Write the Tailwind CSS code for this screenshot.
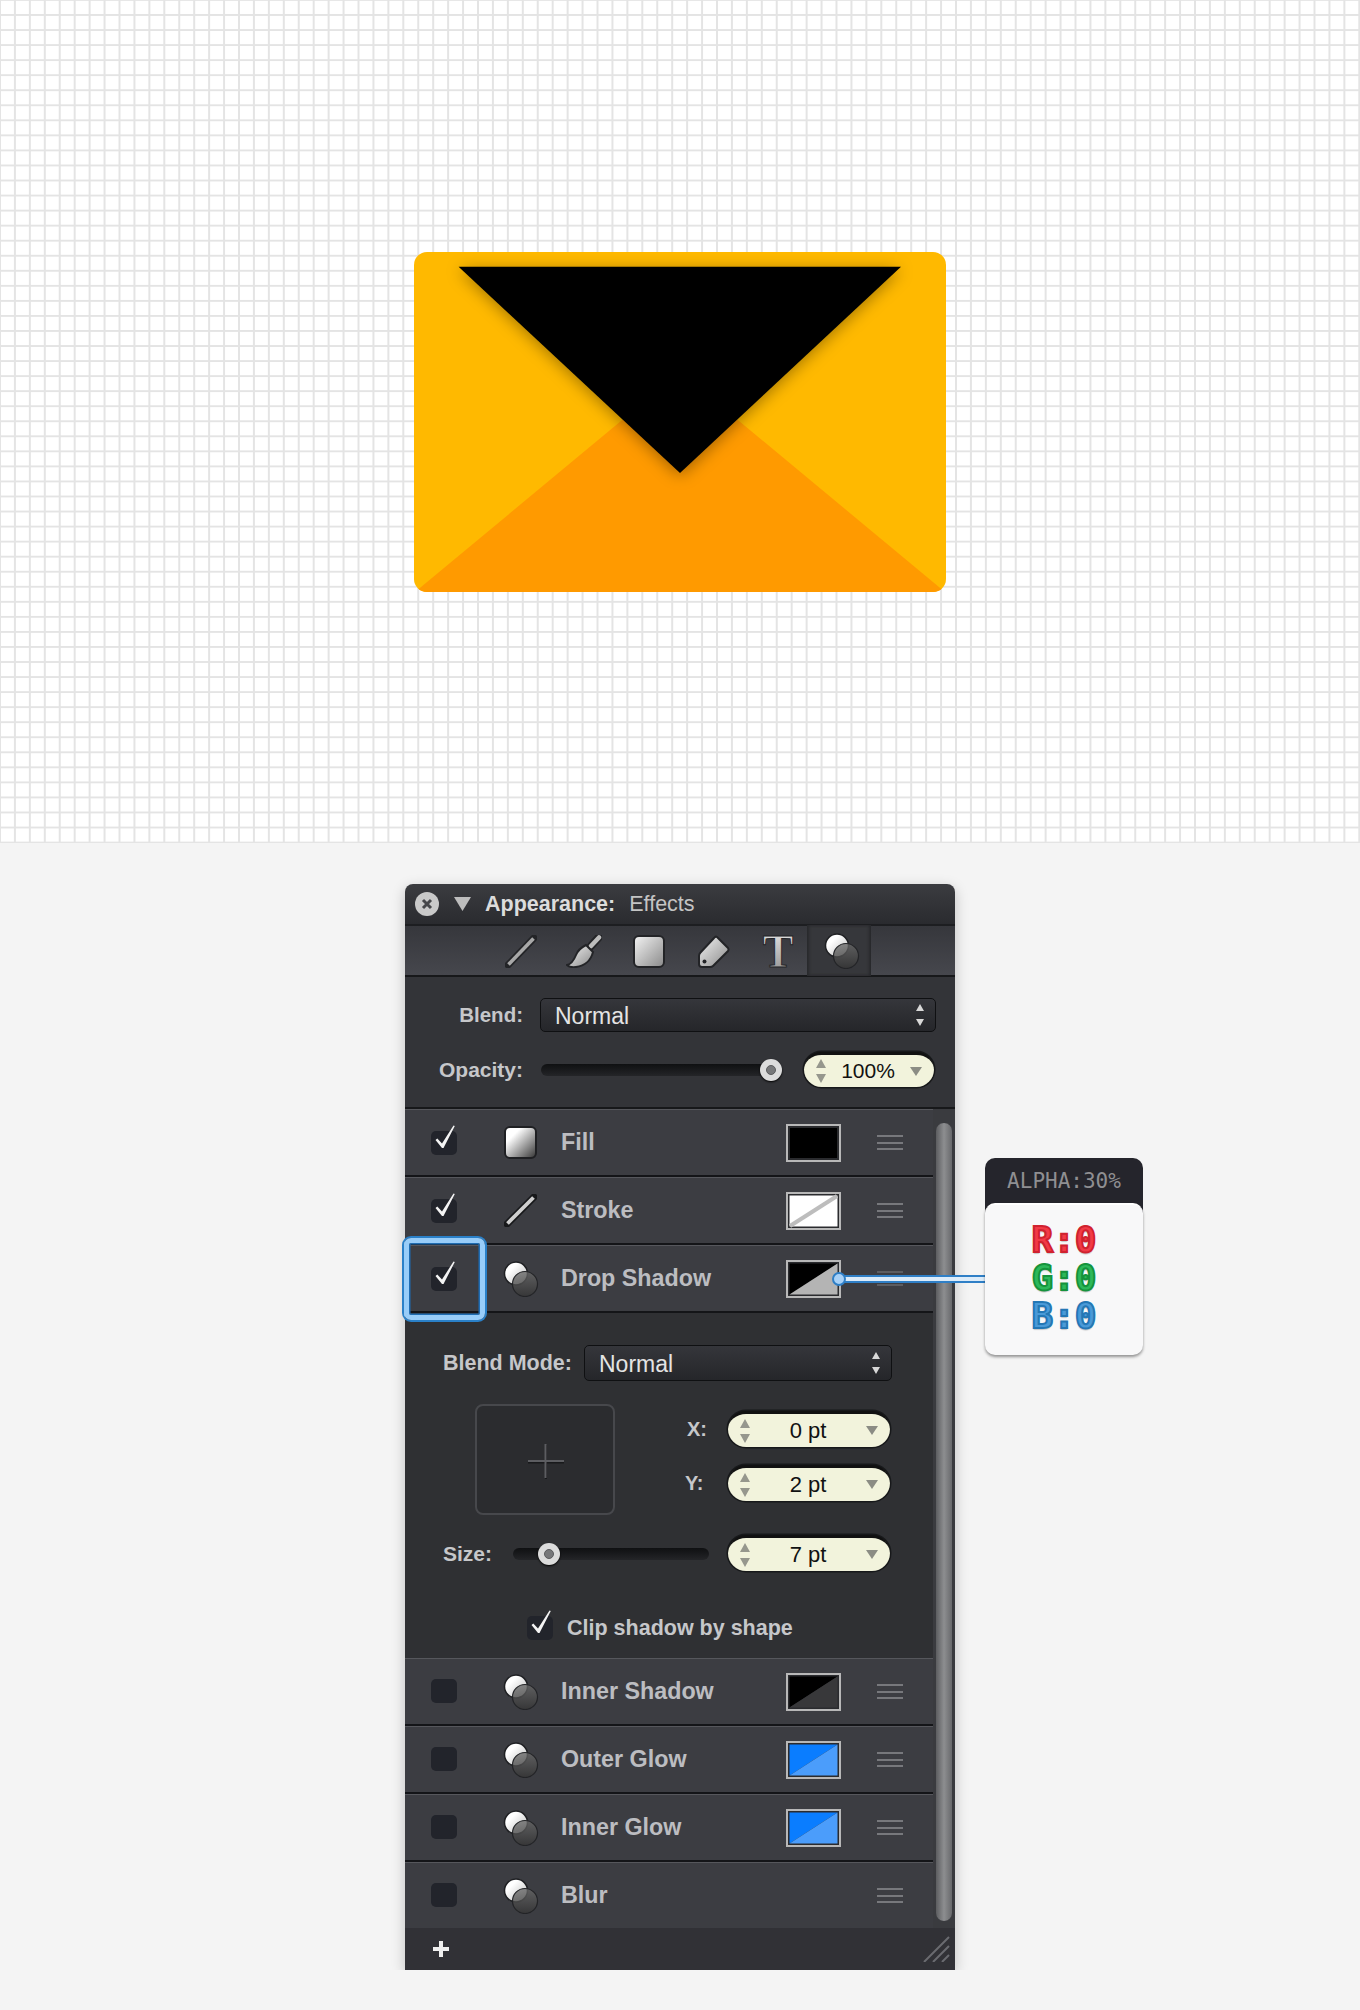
<!DOCTYPE html>
<html lang="en">

<head>
    <meta charset="UTF-8" />
    <meta name="viewport" content="width=device-width, initial-scale=1.0" />
    <title>Appearance Effects</title>
    <script src="https://cdn.jsdelivr.net/npm/@tailwindcss/browser@4"></script>
</head>

<body class="bg-[#f4f4f4] font-['Liberation_Sans',Arial,sans-serif]">

    <!-- shared icon parts -->
    <svg width="0" height="0" class="absolute">
        <defs>
            <linearGradient id="metal" x1="0" y1="0" x2="1" y2="1">
                <stop offset="0" stop-color="#f4f4f4" />
                <stop offset="1" stop-color="#8a8a8a" />
            </linearGradient>
            <linearGradient id="toolT" x1="0" y1="0" x2="0" y2="1">
                <stop offset="0" stop-color="#ececec" />
                <stop offset="1" stop-color="#8c8c8c" />
            </linearGradient>
            <linearGradient id="ball" x1="0" y1="0" x2="1" y2="1">
                <stop offset="0.3" stop-color="#ffffff" />
                <stop offset="1" stop-color="#b8b8b8" />
            </linearGradient>
            <linearGradient id="smoke" x1="0" y1="0" x2="0" y2="1">
                <stop offset="0" stop-color="#6a6a6a" />
                <stop offset="1" stop-color="#353535" />
            </linearGradient>
            <symbol id="circles" viewBox="0 0 36 36">
                <circle cx="13" cy="12.5" r="11.5" fill="url(#ball)" stroke="#1f2023" stroke-width="1.5" />
                <circle cx="22" cy="23" r="12.5" fill="url(#smoke)" fill-opacity="0.78" stroke="#232427" stroke-width="1.2" />
            </symbol>
            <symbol id="stepper" viewBox="0 0 10 26">
                <path d="M5 1 L10 10 H0Z M0 16 H10 L5 25Z" fill="#96978d" />
            </symbol>
            <symbol id="drop" viewBox="0 0 12 9">
                <path d="M0 0 H12 L6 9Z" fill="#8b8c84" />
            </symbol>
            <symbol id="updown" viewBox="0 0 10 24">
                <path d="M5 1 L9 8 H1Z M1 16 H9 L5 23Z" fill="#d8d8d8" />
            </symbol>
            <symbol id="check" viewBox="0 0 28 28">
                <path d="M4.500 15 L6.300 13.400 L11 18.500 L22.500 0.500 L23.800 1 L12.500 23 L11 23 Z" fill="#f4f4f4" />
            </symbol>
        </defs>
    </svg>

    <!-- artboard -->
    <div class="h-[843px] pt-[252px] pl-[414px] bg-white bg-[linear-gradient(to_right,#e4e4e4_2px,transparent_2px),linear-gradient(to_bottom,#e4e4e4_2px,transparent_2px)] bg-[size:14.94px_15.05px] bg-[position:-1px_-1px]">
        <svg width="532" height="340" viewBox="0 0 532 340" class="block">
            <defs>
                <clipPath id="env"><rect width="532" height="340" rx="13" /></clipPath>
                <filter id="flapShadow" x="-20%" y="-20%" width="140%" height="140%">
                    <feDropShadow dx="0" dy="3" stdDeviation="8" flood-color="#000" flood-opacity="0.36" />
                </filter>
            </defs>
            <g clip-path="url(#env)">
                <rect width="532" height="340" fill="#ffb900" />
                <polygon points="1,340 266,120 531,340" fill="#ff9a00" />
                <polygon points="44.6,14.7 487,14.7 266,221" fill="#000" filter="url(#flapShadow)" />
            </g>
        </svg>
    </div>

    <!-- appearance panel -->
    <div class="pt-[41px] pl-[405px]">
        <div class="relative w-[550px] h-[1086px] rounded-t-[8px] shadow-[0_4px_14px_rgba(0,0,0,0.22)]">

            <!-- title bar -->
            <div class="h-[40px] flex items-center rounded-t-[8px] bg-linear-to-b from-[#3b3c40] to-[#2a2b2f]">
                <div class="ml-[10px] w-[24px] h-[24px] rounded-full bg-[#c9c9c9] flex items-center justify-center">
                    <svg width="12" height="12" viewBox="0 0 12 12"><path d="M2 2 L10 10 M10 2 L2 10" stroke="#46474a" stroke-width="3" /></svg>
                </div>
                <svg class="ml-[15px]" width="17" height="14" viewBox="0 0 17 14"><path d="M0 0 H17 L8.500 14Z" fill="#bdbdbd" /></svg>
                <span class="ml-[14px] text-[21.500px] font-bold text-[#dcdcdc]">Appearance:</span>
                <span class="ml-[14px] text-[21.500px] text-[#c4c4c4]">Effects</span>
            </div>

            <!-- tool tabs -->
            <div class="h-[53px] pt-[2px] flex items-center border-t-2 border-b-2 border-t-[#1d1e21] border-b-[#17181a] bg-linear-to-b from-[#36373c] to-[#46474d]">
                <svg class="ml-[100px]" width="32" height="33" viewBox="0 0 32 33">
                    <path d="M3 30 L29 3" stroke="#232427" stroke-width="7" stroke-linecap="round" />
                    <path d="M3.500 29.500 L28.500 3.500" stroke="#a8a8a8" stroke-width="3.600" />
                </svg>
                <svg class="ml-[29px]" width="36" height="33" viewBox="0 0 36 33">
                    <path d="M33 2 L25 11" stroke="#232427" stroke-width="8" stroke-linecap="round" />
                    <path d="M33 2.500 L25 11" stroke="#bcbcbc" stroke-width="4.500" stroke-linecap="round" />
                    <path d="M20 10 L27 17 C25 25 19 31 10 32 C6 32.500 3 32 1 30 C6 29 8 25 10 20 C12 15 16 12 20 10Z" fill="url(#metal)" stroke="#232427" stroke-width="2" />
                </svg>
                <svg class="ml-[31px]" width="32" height="33" viewBox="0 0 32 33">
                    <rect x="1" y="1" width="30" height="31" rx="5" fill="url(#metal)" stroke="#232427" stroke-width="2" />
                </svg>
                <svg class="ml-[33px]" width="32" height="33" viewBox="0 0 32 33">
                    <path d="M19 2 L30 13 Q31 14.500 30 16 L15 31 Q14 32 12 32 L4 32 Q1 32 1 29 L1 21 Q1 19 2.500 17.500 L16 3 Q17.500 1 19 2Z" fill="url(#metal)" stroke="#232427" stroke-width="2" />
                    <circle cx="6.500" cy="26.500" r="2" fill="#232427" />
                </svg>
                <svg class="ml-[33px] overflow-visible" width="30" height="33" viewBox="0 0 30 33">
                    <text x="15" y="32" text-anchor="middle" font-family="Liberation Serif" font-size="46" font-weight="bold" fill="url(#toolT)" stroke="#232427" stroke-width="1">T</text>
                </svg>
                <div class="ml-[14px] mt-[-2px] w-[64px] h-[51px] pl-[6px] flex items-center justify-center bg-[#36373b] shadow-[inset_2px_0_3px_#28292c,inset_-2px_0_3px_#28292c]">
                    <svg width="36" height="36"><use href="#circles" /></svg>
                </div>
            </div>

            <!-- blend and opacity -->
            <div class="h-[132px] pt-[21px] border-b-2 border-b-[#17181a] bg-[#333438]">
                <div class="flex items-center">
                    <span class="w-[118px] text-right text-[20.500px] font-bold text-[#c6c7ca]">Blend:</span>
                    <div class="ml-[17px] w-[396px] h-[34px] pl-[14px] pr-[10px] flex items-center justify-between rounded-[5px] border border-[#0f1012] bg-linear-to-b from-[#35363b] to-[#25262a] text-[23px] text-[#e4e4e4]">
                        <span class="mt-[2px]">Normal</span>
                        <svg width="10" height="24"><use href="#updown" /></svg>
                    </div>
                </div>
                <div class="mt-[20px] flex items-center">
                    <span class="w-[118px] text-right text-[21px] font-bold text-[#c6c7ca]">Opacity:</span>
                    <div class="ml-[18px] w-[230px] h-[12px] rounded-full bg-linear-to-b from-[#0f1012] to-[#242528] relative">
                        <div class="absolute right-[-11px] top-[-5px] w-[22px] h-[22px] rounded-full bg-[#dcdcdc] shadow-[0_1px_2px_#000] flex items-center justify-center">
                            <div class="w-[10px] h-[10px] rounded-full bg-[#77787a] border border-[#5b5c5e]"></div>
                        </div>
                    </div>
                    <div class="ml-[33px] w-[130px] h-[35px] pl-[12px] pr-[12px] flex items-center rounded-full border-t-[3px] border-[#111] bg-[#f2f3dc] shadow-[0_0_0_1.5px_#17181a] text-[21px] text-[#111]">
                        <svg width="10" height="26"><use href="#stepper" /></svg>
                        <span class="flex-1 text-center">100%</span>
                        <svg width="12" height="9"><use href="#drop" /></svg>
                    </div>
                </div>
            </div>

            <div class="flex">
                <div class="w-[528px]">

                    <!-- fill -->
                    <div class="h-[68px] pl-[26px] pr-[30px] flex items-center border-t border-t-[#56575c] border-b-2 border-b-[#141518] bg-[#3c3d42]">
                        <div class="relative w-[26px] h-[24px] rounded-[5px] bg-[#22242b]">
                            <svg class="absolute left-0 top-[-6px]" width="28" height="28"><use href="#check" /></svg>
                        </div>
                        <div class="ml-[47px] w-[33px] h-[33px] rounded-[6px] border-2 border-[#1f2023] bg-[linear-gradient(135deg,#ffffff_25%,#3c3c3c_100%)]"></div>
                        <span class="ml-[24px] text-[23.300px] font-bold text-[#bcbdc1]">Fill</span>
                        <div class="ml-auto w-[55px] h-[38px] p-[2px] border-2 border-[#b8b8b8] bg-[#2a2b2e]"><div class="w-full h-full bg-black"></div></div>
                        <div class="ml-[36px] w-[26px] h-[15px] border-y-2 border-[#77787c] flex items-center"><div class="w-full h-[2px] bg-[#77787c]"></div></div>
                    </div>

                    <!-- stroke -->
                    <div class="h-[68px] pl-[26px] pr-[30px] flex items-center border-t border-t-[#56575c] border-b-2 border-b-[#141518] bg-[#3c3d42]">
                        <div class="relative w-[26px] h-[24px] rounded-[5px] bg-[#22242b]">
                            <svg class="absolute left-0 top-[-6px]" width="28" height="28"><use href="#check" /></svg>
                        </div>
                        <svg class="ml-[47px]" width="33" height="33" viewBox="0 0 33 33">
                            <path d="M3 30 L30 3" stroke="#17181a" stroke-width="7" stroke-linecap="round" />
                            <path d="M3.500 29.500 L29.500 3.500" stroke="#cfcfcf" stroke-width="3.800" />
                        </svg>
                        <span class="ml-[24px] text-[23.300px] font-bold text-[#bcbdc1]">Stroke</span>
                        <svg class="ml-auto" width="55" height="38" viewBox="0 0 55 38">
                            <rect x="1" y="1" width="53" height="36" fill="#2a2b2e" stroke="#b8b8b8" stroke-width="2" />
                            <rect x="3.500" y="3.500" width="48" height="31" fill="#fff" />
                            <path d="M4 34 L51 4" stroke="#bdbdbd" stroke-width="4" />
                        </svg>
                        <div class="ml-[36px] w-[26px] h-[15px] border-y-2 border-[#77787c] flex items-center"><div class="w-full h-[2px] bg-[#77787c]"></div></div>
                    </div>

                    <!-- drop shadow -->
                    <div class="h-[68px] pl-[26px] pr-[30px] flex items-center border-t border-t-[#56575c] border-b-2 border-b-[#141518] bg-[#3c3d42]">
                        <div class="relative w-[26px] h-[24px] rounded-[5px] bg-[#22242b]">
                            <svg class="absolute left-0 top-[-6px]" width="28" height="28"><use href="#check" /></svg>
                        </div>
                        <svg class="ml-[46px]" width="36" height="36"><use href="#circles" /></svg>
                        <span class="ml-[22px] text-[23.300px] font-bold text-[#bcbdc1]">Drop Shadow</span>
                        <svg class="ml-auto" width="55" height="38" viewBox="0 0 55 38">
                            <rect x="1" y="1" width="53" height="36" fill="#2a2b2e" stroke="#b8b8b8" stroke-width="2" />
                            <polygon points="3.500,3.500 51.500,3.500 3.500,34.500" fill="#000" />
                            <polygon points="51.500,3.500 51.500,34.500 3.500,34.500" fill="#b4b4b4" />
                        </svg>
                        <div class="ml-[36px] w-[26px] h-[15px] border-y-2 border-[#5c5d61] flex items-center"><div class="w-full h-[2px] bg-[#5c5d61]"></div></div>
                    </div>

                    <!-- drop shadow settings -->
                    <div class="h-[345px] pt-[32px] bg-[#2f3033]">
                        <div class="pl-[38px] flex items-center">
                            <span class="w-[128px] text-[21.500px] font-bold text-[#c6c7ca] whitespace-nowrap">Blend Mode:</span>
                            <div class="ml-[13px] w-[308px] h-[36px] pl-[14px] pr-[10px] flex items-center justify-between rounded-[5px] border border-[#0f1012] bg-linear-to-b from-[#35363b] to-[#25262a] text-[23px] text-[#e4e4e4]">
                                <span class="mt-[2px]">Normal</span>
                                <svg width="10" height="24"><use href="#updown" /></svg>
                            </div>
                        </div>
                        <div class="mt-[23px] pl-[70px] flex">
                            <div class="w-[140px] h-[111px] rounded-[8px] border-2 border-[#47484c] bg-[#2b2c2f] flex items-center justify-center">
                                <svg class="ml-[2px] mt-[3px]" width="38" height="36" viewBox="0 0 38 36">
                                    <path d="M1 18.500 H37 M19 1 V35" stroke="#18191b" stroke-width="2" transform="translate(0 1)" />
                                    <path d="M1 18 H37 M18.500 1 V35" stroke="#5c5d61" stroke-width="2" />
                                </svg>
                            </div>
                            <div class="ml-[70px] pt-[7px]">
                                <div class="flex items-center">
                                    <span class="w-[43px] pl-[2px] text-[20px] font-bold text-[#c6c7ca]">X:</span>
                                    <div class="w-[162px] h-[36px] pl-[12px] pr-[12px] flex items-center rounded-full border-t-[3px] border-[#111] bg-[#f2f3dc] shadow-[0_0_0_1.5px_#17181a] text-[22px] text-[#111]">
                                        <svg width="10" height="26"><use href="#stepper" /></svg>
                                        <span class="flex-1 text-center">0 pt</span>
                                        <svg width="12" height="9"><use href="#drop" /></svg>
                                    </div>
                                </div>
                                <div class="mt-[18px] flex items-center">
                                    <span class="w-[43px] text-[20px] font-bold text-[#c6c7ca]">Y:</span>
                                    <div class="w-[162px] h-[36px] pl-[12px] pr-[12px] flex items-center rounded-full border-t-[3px] border-[#111] bg-[#f2f3dc] shadow-[0_0_0_1.5px_#17181a] text-[22px] text-[#111]">
                                        <svg width="10" height="26"><use href="#stepper" /></svg>
                                        <span class="flex-1 text-center">2 pt</span>
                                        <svg width="12" height="9"><use href="#drop" /></svg>
                                    </div>
                                </div>
                            </div>
                        </div>
                        <div class="mt-[20px] pl-[38px] flex items-center">
                            <span class="w-[70px] mt-[2px] text-[21px] font-bold text-[#c6c7ca]">Size:</span>
                            <div class="mt-[2px] w-[196px] h-[12px] rounded-full bg-linear-to-b from-[#0f1012] to-[#242528] relative">
                                <div class="absolute left-[25px] top-[-5px] w-[22px] h-[22px] rounded-full bg-[#dcdcdc] shadow-[0_1px_2px_#000] flex items-center justify-center">
                                    <div class="w-[10px] h-[10px] rounded-full bg-[#77787a] border border-[#5b5c5e]"></div>
                                </div>
                            </div>
                            <div class="ml-[19px] w-[162px] h-[36px] pl-[12px] pr-[12px] flex items-center rounded-full border-t-[3px] border-[#111] bg-[#f2f3dc] shadow-[0_0_0_1.5px_#17181a] text-[22px] text-[#111]">
                                <svg width="10" height="26"><use href="#stepper" /></svg>
                                <span class="flex-1 text-center">7 pt</span>
                                <svg width="12" height="9"><use href="#drop" /></svg>
                            </div>
                        </div>
                        <div class="mt-[41px] pl-[122px] flex items-center">
                            <div class="relative w-[26px] h-[24px] rounded-[5px] bg-[#22242b]">
                                <svg class="absolute left-0 top-[-6px]" width="28" height="28"><use href="#check" /></svg>
                            </div>
                            <span class="ml-[14px] text-[21.500px] font-bold text-[#c6c7ca]">Clip shadow by shape</span>
                        </div>
                    </div>

                    <!-- inner shadow -->
                    <div class="h-[68px] pl-[26px] pr-[30px] flex items-center border-t border-t-[#56575c] border-b-2 border-b-[#141518] bg-[#3c3d42]">
                        <div class="mt-[-2px] w-[26px] h-[24px] rounded-[5px] bg-[#22242b]"></div>
                        <svg class="ml-[46px]" width="36" height="36"><use href="#circles" /></svg>
                        <span class="ml-[22px] text-[23.300px] font-bold text-[#bcbdc1]">Inner Shadow</span>
                        <svg class="ml-auto" width="55" height="38" viewBox="0 0 55 38">
                            <rect x="1" y="1" width="53" height="36" fill="#2a2b2e" stroke="#b8b8b8" stroke-width="2" />
                            <polygon points="3.500,3.500 51.500,3.500 3.500,34.500" fill="#000" />
                            <polygon points="51.500,3.500 51.500,34.500 3.500,34.500" fill="#38383a" />
                        </svg>
                        <div class="ml-[36px] w-[26px] h-[15px] border-y-2 border-[#77787c] flex items-center"><div class="w-full h-[2px] bg-[#77787c]"></div></div>
                    </div>

                    <!-- outer glow -->
                    <div class="h-[68px] pl-[26px] pr-[30px] flex items-center border-t border-t-[#56575c] border-b-2 border-b-[#141518] bg-[#3c3d42]">
                        <div class="mt-[-2px] w-[26px] h-[24px] rounded-[5px] bg-[#22242b]"></div>
                        <svg class="ml-[46px]" width="36" height="36"><use href="#circles" /></svg>
                        <span class="ml-[22px] text-[23.300px] font-bold text-[#bcbdc1]">Outer Glow</span>
                        <svg class="ml-auto" width="55" height="38" viewBox="0 0 55 38">
                            <rect x="1" y="1" width="53" height="36" fill="#2a2b2e" stroke="#b8b8b8" stroke-width="2" />
                            <polygon points="3.500,3.500 51.500,3.500 3.500,34.500" fill="#0a7dff" />
                            <polygon points="51.500,3.500 51.500,34.500 3.500,34.500" fill="#4b9dfb" />
                        </svg>
                        <div class="ml-[36px] w-[26px] h-[15px] border-y-2 border-[#77787c] flex items-center"><div class="w-full h-[2px] bg-[#77787c]"></div></div>
                    </div>

                    <!-- inner glow -->
                    <div class="h-[68px] pl-[26px] pr-[30px] flex items-center border-t border-t-[#56575c] border-b-2 border-b-[#141518] bg-[#3c3d42]">
                        <div class="mt-[-2px] w-[26px] h-[24px] rounded-[5px] bg-[#22242b]"></div>
                        <svg class="ml-[46px]" width="36" height="36"><use href="#circles" /></svg>
                        <span class="ml-[22px] text-[23.300px] font-bold text-[#bcbdc1]">Inner Glow</span>
                        <svg class="ml-auto" width="55" height="38" viewBox="0 0 55 38">
                            <rect x="1" y="1" width="53" height="36" fill="#2a2b2e" stroke="#b8b8b8" stroke-width="2" />
                            <polygon points="3.500,3.500 51.500,3.500 3.500,34.500" fill="#0a7dff" />
                            <polygon points="51.500,3.500 51.500,34.500 3.500,34.500" fill="#4b9dfb" />
                        </svg>
                        <div class="ml-[36px] w-[26px] h-[15px] border-y-2 border-[#77787c] flex items-center"><div class="w-full h-[2px] bg-[#77787c]"></div></div>
                    </div>

                    <!-- blur -->
                    <div class="h-[66px] pl-[26px] pr-[30px] flex items-center border-t border-t-[#56575c] bg-[#3c3d42]">
                        <div class="mt-[-2px] w-[26px] h-[24px] rounded-[5px] bg-[#22242b]"></div>
                        <svg class="ml-[46px]" width="36" height="36"><use href="#circles" /></svg>
                        <span class="ml-[22px] text-[23.300px] font-bold text-[#bcbdc1]">Blur</span>
                        <div class="ml-auto w-[26px] h-[15px] border-y-2 border-[#77787c] flex items-center"><div class="w-full h-[2px] bg-[#77787c]"></div></div>
                    </div>
                </div>

                <!-- scrollbar -->
                <div class="w-[22px] pt-[13px] pl-[2px] bg-[#3a3b3f]">
                    <div class="w-[18px] h-[800px] rounded-full border border-[#3a3b3f] bg-[linear-gradient(to_right,#5c5d60,#8d8e90_50%,#68696c)]"></div>
                </div>
            </div>

            <!-- footer -->
            <div class="h-[42px] pr-[5px] pl-[28px] flex items-center justify-between bg-[#313136]">
                <svg width="16" height="16" viewBox="0 0 16 16"><path d="M6 0 H10 V6 H16 V10 H10 V16 H6 V10 H0 V6 H6Z" fill="#efefef" /></svg>
                <svg width="27" height="26" viewBox="0 0 27 26"><path d="M1 26 L26 1 M10 26 L26 10 M19 26 L26 19" stroke="#6a6b70" stroke-width="2" /></svg>
            </div>

            <!-- highlight around the checkbox -->
            <div class="absolute left-[-1px] top-[354px] w-[81px] h-[82px] rounded-[7px] border-[5px] border-[#98cdf9] shadow-[0_0_0_2px_#2a80c8,inset_0_0_0_1.5px_#1f6db3]"></div>

            <!-- connector line -->
            <div class="absolute left-[434px] top-[391px] w-[146px] h-[8px] border-y-2 border-[#2f7fc6] bg-[#dcecfa]"></div>
            <div class="absolute left-[427px] top-[388px] w-[14px] h-[14px] rounded-full border-2 border-[#2f7fc6] bg-[#a9d2f8]"></div>

            <!-- colour tooltip -->
            <div class="absolute left-[580px] top-[274px] w-[158px]">
                <div class="h-[62px] pt-[11px] rounded-t-[10px] bg-[#25252c] text-center font-['DejaVu_Sans_Mono',monospace] text-[21px] leading-[24px] text-[#8f8f92]">ALPHA:30%</div>
                <div class="h-[152px] mt-[-17px] pt-[16px] relative rounded-[10px] border-t-2 border-white bg-[#f8f8f9] shadow-[0_2px_3px_rgba(0,0,0,0.4)] text-center font-['DejaVu_Sans_Mono',monospace] text-[36px] font-bold leading-[38px]">
                    <div class="text-[#f23a46] [-webkit-text-stroke:2px_#d0222f] [text-shadow:0_2px_1px_rgba(0,0,0,0.2)]">R:0</div>
                    <div class="text-[#2cb85a] [-webkit-text-stroke:2px_#15933c] [text-shadow:0_2px_1px_rgba(0,0,0,0.2)]">G:0</div>
                    <div class="text-[#4a9ad8] [-webkit-text-stroke:2px_#2477b5] [text-shadow:0_2px_1px_rgba(0,0,0,0.2)]">B:0</div>
                </div>
            </div>
        </div>
    </div>

</body>

</html>
